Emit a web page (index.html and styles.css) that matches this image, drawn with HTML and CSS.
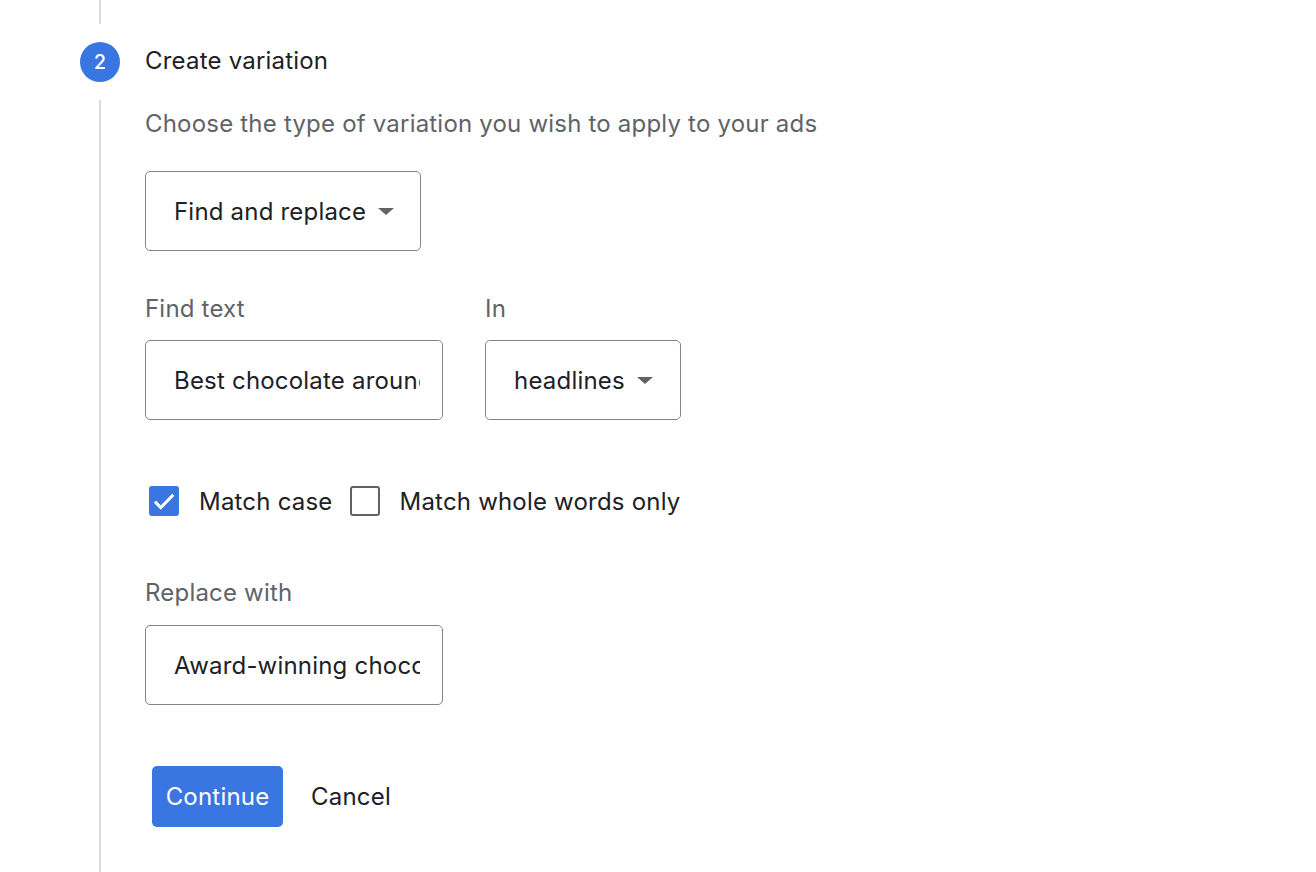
FILE: index.html
```html
<!DOCTYPE html>
<html>
<head>
  <meta charset="utf-8">
  <title>Create variation</title>
  <link rel="stylesheet" href="styles.css">
</head>
<body>
  <div class="stepper">
    <div class="connector"></div>

    <div class="step">
      <div class="step-rail">
        <div class="step-number">2</div>
        <div class="step-line"></div>
      </div>

      <div class="step-body">
        <div class="step-title">Create variation</div>
        <div class="step-desc">Choose the type of variation you wish to apply to your ads</div>

        <div class="select select-type">
          <span>Find and replace</span>
          <span class="arrow"></span>
        </div>

        <div class="field-row">
          <div class="field">
            <label class="field-label" for="findText">Find text</label>
            <input class="text-input" type="text" id="findText" value="Best chocolate around">
          </div>
          <div class="field">
            <div class="field-label">In</div>
            <div class="select select-in">
              <span>headlines</span>
              <span class="arrow"></span>
            </div>
          </div>
        </div>

        <div class="options">
          <div class="checkbox checked">
            <svg viewBox="0 0 24 24" width="26" height="26"><path d="M3.6 12.6l5.4 5.4L20.6 6.2" fill="none" stroke="#fff" stroke-width="2.8"/></svg>
          </div>
          <span class="option-label">Match case</span>
          <div class="checkbox"></div>
          <span class="option-label">Match whole words only</span>
        </div>

        <label class="field-label replace-label" for="replaceText">Replace with</label>
        <input class="text-input" type="text" id="replaceText" value="Award-winning chocolate">

        <div class="actions">
          <button class="btn-primary">Continue</button>
          <button class="btn-text">Cancel</button>
        </div>
      </div>
    </div>
  </div>
</body>
</html>
```

FILE: styles.css
```css
body {
  margin: 0;
  font-family: Inter, Roboto, "Noto Sans", sans-serif;
  font-size: 24px;
  letter-spacing: 0.2px;
  color: #202124;
  background: #fff;
}

.stepper {
  padding-left: 80px;
  height: 872px;
  overflow: hidden;
  display: flex;
  flex-direction: column;
}

.connector {
  width: 2px;
  height: 24px;
  margin-left: 19px;
  background: #dadce0;
}

.step {
  display: grid;
  grid-template-columns: 40px 1fr;
  column-gap: 25px;
  margin-top: 18px;
  flex: 1;
}

.step-rail {
  display: flex;
  flex-direction: column;
  align-items: center;
}

.step-number {
  width: 40px;
  height: 40px;
  border-radius: 50%;
  background: #3a76e2;
  color: #fff;
  font-size: 20px;
  font-weight: 500;
  letter-spacing: 0;
  display: flex;
  align-items: center;
  justify-content: center;
}

.step-line {
  flex: 1;
  width: 2px;
  margin-top: 18px;
  background: #dadce0;
}

.step-body {
  display: flex;
  flex-direction: column;
  align-items: flex-start;
}

.step-title {
  line-height: 40px;
  margin-top: -1px;
}

.step-desc {
  margin-top: 28px;
  line-height: 30px;
  color: #5f6368;
}

.select {
  box-sizing: border-box;
  height: 80px;
  border: 1px solid #80868b;
  border-radius: 5px;
  padding-left: 28px;
  display: flex;
  align-items: center;
}

.select-type {
  width: 276px;
  margin-top: 32px;
}

.select-in {
  width: 196px;
}

.arrow {
  width: 0;
  height: 0;
  margin-left: 12px;
  border-left: 8px solid transparent;
  border-right: 8px solid transparent;
  border-top: 7px solid #5f6368;
}

.field-row {
  display: flex;
  gap: 42px;
  margin-top: 43px;
}

.field {
  display: flex;
  flex-direction: column;
}

.field-label {
  display: block;
  line-height: 30px;
  color: #5f6368;
  margin-bottom: 16px;
}

.text-input {
  box-sizing: border-box;
  width: 298px;
  height: 80px;
  border: 1px solid #80868b;
  border-radius: 5px;
  padding: 0 22px 0 28px;
  font-family: inherit;
  font-size: inherit;
  letter-spacing: inherit;
  color: #202124;
  outline: none;
  margin: 0;
}

.options {
  display: flex;
  align-items: center;
  height: 30px;
  margin-top: 66px;
  padding-left: 4px;
}

.checkbox {
  box-sizing: border-box;
  width: 30px;
  height: 30px;
  border: 2px solid #5f6368;
  border-radius: 3px;
  display: flex;
  align-items: center;
  justify-content: center;
}

.checkbox.checked {
  background: #3a76e2;
  border-color: #3a76e2;
}

.option-label {
  margin: 0 17px 0 20px;
}

.replace-label {
  margin-top: 62px;
  margin-bottom: 17px;
}

.actions {
  display: flex;
  align-items: center;
  gap: 28px;
  margin-top: 61px;
  padding-left: 7px;
}

button {
  font-family: inherit;
  font-size: inherit;
  letter-spacing: inherit;
  border: none;
  cursor: pointer;
  padding: 0;
}

.btn-primary {
  width: 131px;
  height: 61px;
  border-radius: 5px;
  background: #3a76e2;
  color: #fff;
}

.btn-text {
  background: none;
  color: #202124;
}
```
